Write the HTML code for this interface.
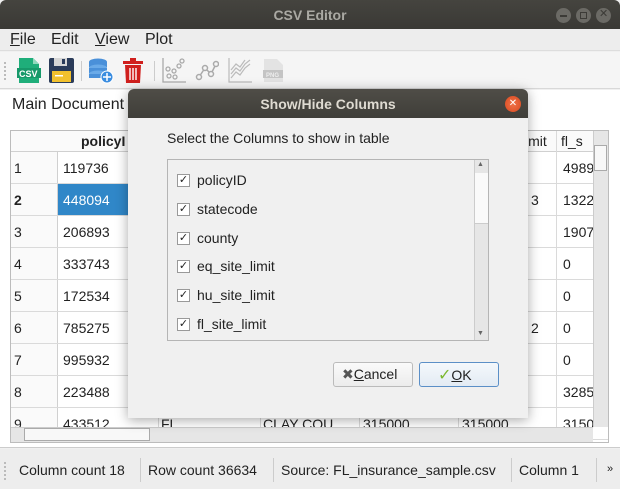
<!DOCTYPE html>
<html><head><style>
*{margin:0;padding:0;box-sizing:border-box}
body{width:620px;height:489px;position:relative;overflow:hidden;font-family:"Liberation Sans","DejaVu Sans",sans-serif;background:#f0f0f0;color:#222}
.a{position:absolute}
.t{font-size:14px;white-space:nowrap}
.cell{position:absolute;font-size:14px;white-space:nowrap}
</style></head><body>
<!-- title bar -->
<div class="a" style="left:0;top:0;width:620px;height:29px;background:linear-gradient(#45443f,#3a3935);border-radius:6px 6px 0 0"></div>
<div class="a t" style="left:0;top:7px;width:620px;text-align:center;color:#aaa9a3;font-weight:bold;font-size:14px">CSV Editor</div>
<div class="a" style="left:556px;top:8px;width:15px;height:15px;border-radius:50%;background:#6b6a65"></div>
<div class="a" style="left:576px;top:8px;width:15px;height:15px;border-radius:50%;background:#6b6a65"></div>
<div class="a" style="left:596px;top:8px;width:15px;height:15px;border-radius:50%;background:#6b6a65"></div>
<div class="a" style="left:560px;top:15px;width:7px;height:1.5px;background:#3c3b37"></div>
<div class="a" style="left:580px;top:12px;width:7px;height:7px;border:1.5px solid #3c3b37"></div>
<div class="a t" style="left:599px;top:7px;font-size:11px;color:#3c3b37">✕</div>
<!-- menu -->
<div class="a" style="left:0;top:29px;width:620px;height:22px;background:#ededed;border-bottom:1px solid #ddd"></div>
<div class="a t" style="left:10px;top:31px;font-size:16px"><u>F</u>ile</div>
<div class="a t" style="left:51px;top:31px;font-size:16px">Edit</div>
<div class="a t" style="left:95px;top:31px;font-size:16px"><u>V</u>iew</div>
<div class="a t" style="left:145px;top:31px;font-size:16px">Plot</div>
<!-- toolbar -->
<div class="a" style="left:0;top:52px;width:620px;height:37px;background:#f5f5f5;border-bottom:1px solid #d8d8d8"></div>
<div class="a" style="left:4px;top:62px;width:2px;height:18px;border-left:2px dotted #bbb"></div>
<svg class="a" style="left:16px;top:57px" width="26" height="27"><path d="M3 1h14l6 6v19H3z" fill="#1fae7a"/><path d="M17 1v6h6" fill="#8fd9bd"/><rect x="1" y="11" width="24" height="10" fill="#17996a"/><text x="3" y="20" font-size="9" font-weight="bold" fill="#fff" font-family="Liberation Sans">CSV</text></svg>
<svg class="a" style="left:49px;top:58px" width="25" height="25"><rect x="0" y="0" width="25" height="25" rx="2" fill="#2b3c5a"/><rect x="5" y="0" width="13" height="8" fill="#d6d6d6"/><rect x="13" y="1" width="3" height="5" fill="#2b3c5a"/><rect x="3" y="13" width="19" height="11" fill="#f2c12e"/><rect x="6" y="17" width="8" height="1.5" fill="#fff"/></svg>
<div class="a" style="left:81px;top:61px;width:1px;height:20px;background:#ccc"></div>
<svg class="a" style="left:88px;top:58px" width="26" height="26"><ellipse cx="10" cy="4" rx="9" ry="3.5" fill="#4a90d9"/><rect x="1" y="4" width="18" height="5" fill="#4a90d9"/><ellipse cx="10" cy="10" rx="9" ry="3.5" fill="#6aaae8"/><rect x="1" y="10" width="18" height="5" fill="#4a90d9"/><ellipse cx="10" cy="16" rx="9" ry="3.5" fill="#6aaae8"/><rect x="1" y="16" width="18" height="4" fill="#4a90d9"/><circle cx="19" cy="19" r="6" fill="#3a8de0" stroke="#fff"/><path d="M19 15v8M15 19h8" stroke="#fff" stroke-width="1.5"/></svg>
<svg class="a" style="left:123px;top:58px" width="20" height="25"><rect x="0" y="3" width="20" height="3" fill="#d0201e"/><rect x="7" y="0" width="6" height="3" fill="#d0201e"/><path d="M2 7h16l-1 18H3z" fill="#d0201e"/><path d="M7 10v12M10 10v12M13 10v12" stroke="#fff" stroke-width="1.4"/></svg>
<div class="a" style="left:154px;top:61px;width:1px;height:20px;background:#ccc"></div>
<svg class="a" style="left:162px;top:58px" width="25" height="25" fill="none" stroke="#aaa" stroke-width="1.3"><path d="M1 0v24h23"/><circle cx="7" cy="18" r="2"/><circle cx="12" cy="13" r="2"/><circle cx="17" cy="8" r="2"/><circle cx="20" cy="3" r="2"/><circle cx="6" cy="11" r="2"/><circle cx="13" cy="19" r="2"/></svg>
<svg class="a" style="left:195px;top:60px" width="24" height="22" fill="none" stroke="#aaa" stroke-width="1.5"><path d="M4 17l6-9 6 6 5-10"/><circle cx="4" cy="17" r="2.5" fill="#f5f5f5"/><circle cx="10" cy="8" r="2.5" fill="#f5f5f5"/><circle cx="16" cy="14" r="2.5" fill="#f5f5f5"/><circle cx="21" cy="4" r="2.5" fill="#f5f5f5"/></svg>
<svg class="a" style="left:228px;top:58px" width="24" height="25" fill="none" stroke="#bbb" stroke-width="1.2"><path d="M1 0v24h23"/><path d="M3 16l5-6 4 3 5-7 5-4M3 20l5-6 4 3 5-7 5-4M3 12l5-6 4 3 5-7"/></svg>
<svg class="a" style="left:262px;top:58px" width="22" height="25"><path d="M2 1h13l6 6v17H2z" fill="#e3e3e3"/><rect x="1" y="12" width="20" height="8" fill="#c4c4c4"/><text x="4" y="19" font-size="6" font-weight="bold" fill="#eee" font-family="Liberation Sans">PNG</text></svg>
<!-- main area -->
<div class="a" style="left:0;top:90px;width:620px;height:358px;background:#fff;border-bottom:1px solid #ccc"></div>
<div class="a t" style="left:12px;top:96px;font-size:16px">Main Document</div>
<div class="a" style="left:10px;top:130px;width:599px;height:313px;border:1px solid #bcbcbc;background:#fff;overflow:hidden">
 <div class="a" style="left:0;top:0;width:597px;height:21px;background:#fafafa;border-bottom:1px solid #d0d0d0"></div>
 <div class="cell" style="left:70px;top:2px;font-weight:bold">policyI</div>
 <div class="cell" style="left:514px;top:2px">imit</div>
 <div class="cell" style="left:550px;top:2px">fl_s</div>
 <div class="a" style="left:0;top:21px;width:47px;height:290px;background:#fafafa;border-right:1px solid #d0d0d0"></div>
 <div id="rows"></div>
</div>
<script>
var vals=[["119736","4989"],["448094","1322"],["206893","1907"],["333743","0"],["172534","0"],["785275","0"],["995932","0"],["223488","3285"],["433512","3150"]];
var h='';var cols=[47,147,249,348,447,545];
for(var i=0;i<9;i++){var y=21+i*32;
h+='<div class="a" style="left:0;top:'+(y+31)+'px;width:597px;height:1px;background:#dadada"></div>';
h+='<div class="cell" style="left:3px;top:'+(y+8)+'px;'+(i==1?'font-weight:bold':'')+'">'+(i+1)+'</div>';
if(i==1)h+='<div class="a" style="left:47px;top:'+y+'px;width:100px;height:31px;background:#3087c8"></div>';
h+='<div class="cell" style="left:52px;top:'+(y+8)+'px;'+(i==1?'color:#fff':'')+'">'+vals[i][0]+'</div>';
h+='<div class="cell" style="left:552px;top:'+(y+8)+'px">'+vals[i][1]+'</div>';}
h+='<div class="cell" style="left:150px;top:285px">FL</div><div class="cell" style="left:252px;top:285px">CLAY COU...</div><div class="cell" style="left:352px;top:285px">315000</div><div class="cell" style="left:451px;top:285px">315000</div>';
h+='<div class="cell" style="left:520px;top:61px">3</div><div class="cell" style="left:520px;top:189px">2</div>';
for(var c=1;c<cols.length;c++)h+='<div class="a" style="left:'+cols[c]+'px;top:0;width:1px;height:311px;background:#dadada"></div>';
document.getElementById('rows').innerHTML=h;
</script>
<!-- scrollbars -->
<div class="a" style="left:593px;top:131px;width:15px;height:296px;background:#e6e6e6;border-left:1px solid #ccc"></div>
<div class="a" style="left:594px;top:145px;width:13px;height:26px;background:#f8f8f8;border:1px solid #aaa"></div>
<div class="a" style="left:11px;top:427px;width:582px;height:15px;background:#e6e6e6;border-top:1px solid #ccc"></div>
<div class="a" style="left:24px;top:428px;width:126px;height:13px;background:#f8f8f8;border:1px solid #aaa"></div>
<!-- status bar -->
<div class="a" style="left:0;top:449px;width:620px;height:40px;background:#ededed"></div>
<div class="a" style="left:4px;top:462px;width:2px;height:18px;border-left:2px dotted #bbb"></div>
<div class="a t" style="left:19px;top:462px">Column count 18</div>
<div class="a" style="left:140px;top:458px;width:1px;height:24px;background:#ccc"></div>
<div class="a t" style="left:148px;top:462px">Row count 36634</div>
<div class="a" style="left:273px;top:458px;width:1px;height:24px;background:#ccc"></div>
<div class="a t" style="left:281px;top:462px">Source: FL_insurance_sample.csv</div>
<div class="a" style="left:511px;top:458px;width:1px;height:24px;background:#ccc"></div>
<div class="a t" style="left:519px;top:462px">Column 1</div>
<div class="a" style="left:596px;top:458px;width:1px;height:24px;background:#ccc"></div>
<div class="a t" style="left:607px;top:463px;font-size:11px">»</div>
<!-- dialog -->
<div class="a" style="left:128px;top:89px;width:400px;height:329px;background:#f0f0f0;box-shadow:0 2px 12px rgba(0,0,0,.35);border-radius:6px 6px 0 0"></div>
<div class="a" style="left:128px;top:89px;width:400px;height:29px;background:linear-gradient(#4f4d47,#3f3e39);border-radius:6px 6px 0 0"></div>
<div class="a t" style="left:128px;top:96px;width:400px;text-align:center;color:#dfdbd2;font-weight:bold">Show/Hide Columns</div>
<div class="a" style="left:505px;top:96px;width:16px;height:16px;border-radius:50%;background:radial-gradient(#f0734a,#d9481e);color:#fff;font-size:10px;text-align:center;line-height:16px">✕</div>
<div class="a t" style="left:167px;top:130px">Select the Columns to show in table</div>
<div class="a" style="left:167px;top:159px;width:322px;height:182px;border:1px solid #b5b5b5;background:#f0f0f0"></div>
<div class="a" style="left:474px;top:160px;width:14px;height:180px;background:#e6e6e6;border-left:1px solid #ccc"></div>
<div class="a" style="left:475px;top:173px;width:13px;height:51px;background:#fafafa;border-bottom:1px solid #ccc"></div>
<div class="a" style="left:477px;top:161px;font-size:7px;color:#666">▲</div>
<div class="a" style="left:477px;top:330px;font-size:7px;color:#666">▼</div>
<div id="items"></div>
<script>
var n=["policyID","statecode","county","eq_site_limit","hu_site_limit","fl_site_limit"],s='';
for(var i=0;i<6;i++){var y=174+i*28.8;
s+='<div class="a" style="left:177px;top:'+y+'px;width:13px;height:13px;border:1px solid #999;background:#fff;font-size:11px;line-height:11px;text-align:center;font-weight:bold">✓</div>';
s+='<div class="a t" style="left:197px;top:'+(y-2)+'px">'+n[i]+'</div>';}
document.getElementById('items').innerHTML=s;
</script>
<div class="a" style="left:333px;top:362px;width:80px;height:25px;border:1px solid #bbb;border-radius:3px;background:linear-gradient(#fafafa,#ececec)"></div>
<div class="a t" style="left:342px;top:366px"><span style="color:#555;font-weight:bold">✖</span><u>C</u>ancel</div>
<div class="a" style="left:419px;top:362px;width:80px;height:25px;border:1px solid #5b8fc7;border-radius:3px;background:linear-gradient(#f4f8fc,#e3ebf3)"></div>
<div class="a t" style="left:438px;top:365px"><span style="color:#7cb82f;font-weight:bold;font-size:16px">✓</span><u>O</u>K</div>
</body></html>
